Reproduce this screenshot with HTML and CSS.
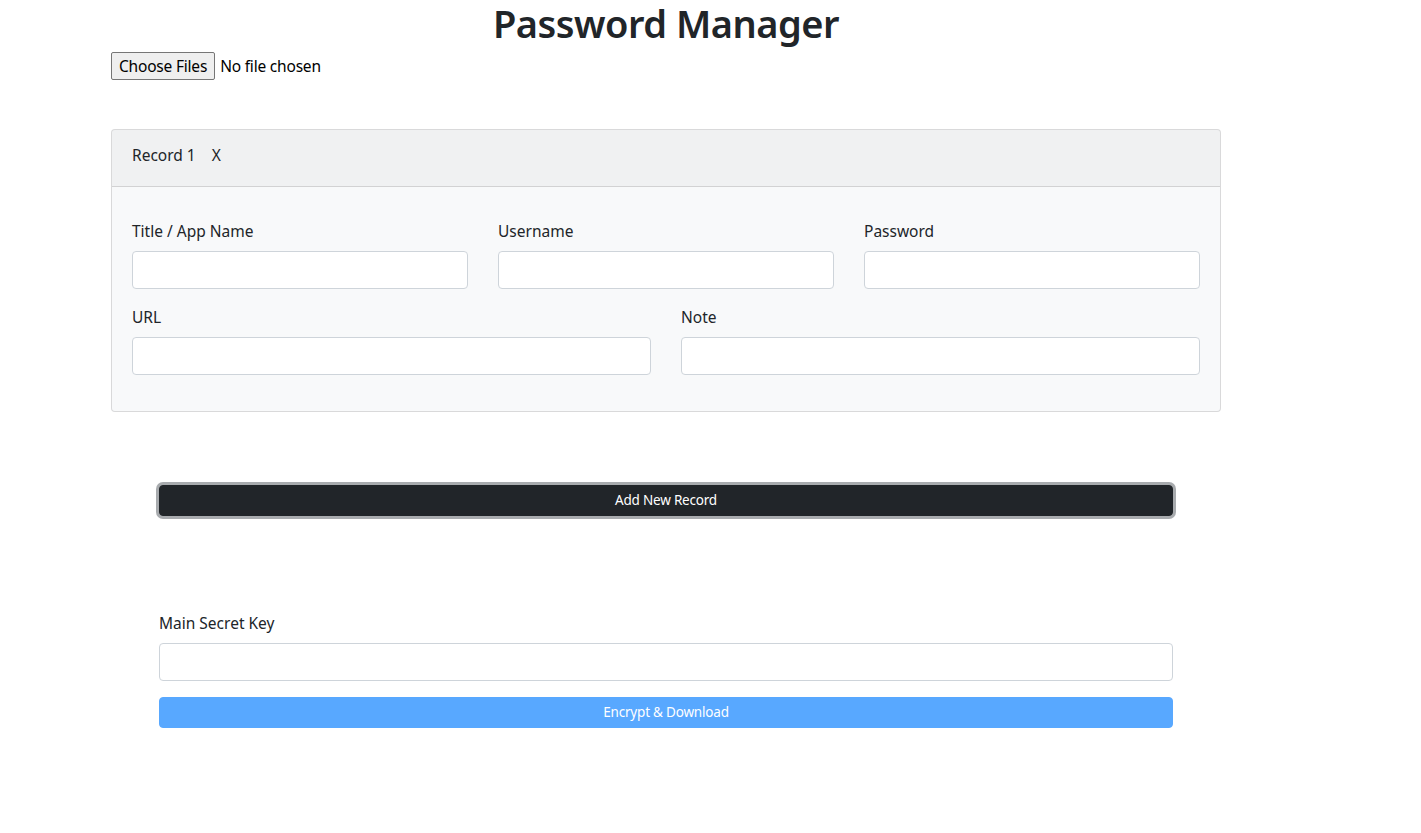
FILE: index.html
```html
<!DOCTYPE html>
<html lang="en">
<head>
<meta charset="utf-8">
<title>Password Manager</title>
<link rel="stylesheet" href="styles.css">
</head>
<body>
<div class="page">
  <h1 class="title">Password Manager</h1>
  <div class="file-row">
    <button class="file-btn" type="button">Choose Files</button>
    <span class="file-name">No file chosen</span>
  </div>

  <div class="card">
    <div class="card-header">
      <span>Record 1</span>
      <span class="close">X</span>
    </div>
    <div class="card-body">
      <div class="row row-3">
        <div class="field">
          <label class="label">Title / App Name</label>
          <input class="control" type="text">
        </div>
        <div class="field">
          <label class="label">Username</label>
          <input class="control" type="text">
        </div>
        <div class="field">
          <label class="label">Password</label>
          <input class="control" type="text">
        </div>
      </div>
      <div class="row row-2">
        <div class="field">
          <label class="label">URL</label>
          <input class="control" type="text">
        </div>
        <div class="field">
          <label class="label">Note</label>
          <input class="control" type="text">
        </div>
      </div>
    </div>
  </div>

  <div class="actions">
    <button class="btn btn-dark" type="button">Add New Record</button>
  </div>

  <div class="secret">
    <label class="label">Main Secret Key</label>
    <input class="control" type="text">
    <button class="btn btn-primary" type="button" disabled>Encrypt &amp; Download</button>
  </div>
</div>
</body>
</html>
```

FILE: styles.css
```css
* { box-sizing: border-box; }

body {
  margin: 0;
  background: #fff;
  color: #212529;
  font-family: "Noto Sans", "Open Sans", "Liberation Sans", sans-serif;
  font-size: 16px;
  line-height: 24px;
}

.page {
  width: 1110px;
  margin-left: 111px;
}

.title {
  margin: 0;
  padding-top: 2px;
  text-align: center;
  font-size: 38px;
  font-weight: 600;
  line-height: 42px;
  letter-spacing: -0.5px;
  color: #212529;
}

.file-row {
  display: flex;
  align-items: center;
  margin-top: 8px;
  height: 28px;
}

.file-btn {
  height: 28px;
  padding: 0 7px;
  font-family: inherit;
  font-size: 15.5px;
  color: #000;
  background: #efefef;
  border: 1px solid #767676;
  border-radius: 2px;
  letter-spacing: -0.2px;
}

.file-name {
  margin-left: 5px;
  font-size: 15.5px;
  color: #000;
  letter-spacing: -0.2px;
}

.card {
  margin-top: 49px;
  border: 1px solid rgba(0, 0, 0, 0.125);
  border-radius: 4px;
  background: #f8f9fa;
  overflow: hidden;
}

.card-header {
  display: flex;
  height: 57px;
  align-items: center;
  padding: 0 20px 6px;
  background: rgba(0, 0, 0, 0.03);
  border-bottom: 1px solid rgba(0, 0, 0, 0.125);
  font-size: 15.5px;
}

.close {
  margin-left: 16px;
}

.card-body {
  padding: 32px 20px 20px;
}

.row {
  display: grid;
  column-gap: 30px;
}

.row-3 { grid-template-columns: repeat(3, 1fr); }
.row-2 { grid-template-columns: repeat(2, 1fr); }

.field {
  margin-bottom: 16px;
}

.label {
  display: block;
  margin-bottom: 8px;
  font-size: 15.5px;
  line-height: 24px;
}

.control {
  display: block;
  width: 100%;
  height: 38px;
  padding: 6px 12px;
  font-family: inherit;
  font-size: 16px;
  background: #fff;
  border: 1px solid #ced4da;
  border-radius: 4px;
  outline: none;
}

.actions {
  margin-top: 73px;
  padding: 0 48px;
}

.btn {
  display: block;
  width: 100%;
  height: 31px;
  padding: 4px 8px;
  font-family: inherit;
  font-size: 13.5px;
  line-height: 21px;
  letter-spacing: -0.2px;
  color: #fff;
  text-align: center;
  border-radius: 4px;
}

.btn-dark {
  background: #212529;
  border: 1px solid #212529;
  box-shadow: 0 0 0 3px rgba(82, 88, 93, 0.5);
}

.btn-primary {
  margin-top: 16px;
  background: #007bff;
  border: 1px solid #007bff;
  opacity: 0.65;
}

.secret {
  margin-top: 95px;
  padding: 0 48px;
}
```
